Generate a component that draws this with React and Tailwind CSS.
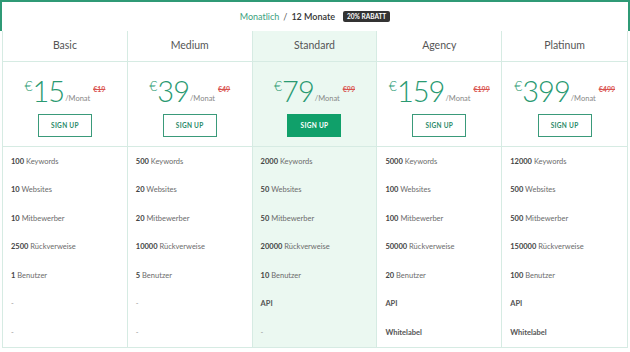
import React from "react";

const plans = [
  {name: "Basic", price: "15", old: "€19", features: ["100|Keywords", "10|Websites", "10|Mitbewerber", "2500|Rückverweise", "1|Benutzer", "-", "-"]},
  {name: "Medium", price: "39", old: "€49", features: ["500|Keywords", "20|Websites", "20|Mitbewerber", "10000|Rückverweise", "5|Benutzer", "-", "-"]},
  {name: "Standard", price: "79", old: "€99", featured: true, features: ["2000|Keywords", "50|Websites", "50|Mitbewerber", "20000|Rückverweise", "10|Benutzer", "API", "-"]},
  {name: "Agency", price: "159", old: "€199", features: ["5000|Keywords", "100|Websites", "100|Mitbewerber", "50000|Rückverweise", "20|Benutzer", "API", "Whitelabel"]},
  {name: "Platinum", price: "399", old: "€499", features: ["12000|Keywords", "500|Websites", "500|Mitbewerber", "150000|Rückverweise", "100|Benutzer", "API", "Whitelabel"]},
];

function Feature({value}) {
  if (value === "-") {
    return <span className="text-[#999]">-</span>;
  }
  if (!value.includes("|")) {
    return <span className="font-bold text-[#555]">{value}</span>;
  }
  const [num, label] = value.split("|");
  return (
      <span>
        <span className="font-bold text-[#444]">{num}</span>{" "}
        <span className="text-[#6b6b6b]">{label}</span>
      </span>
  );
}

function PlanColumn({plan, last}) {
  return (
      <div className={`flex flex-col ${last ? "" : "border-r border-[#d6ebe3]"} ${plan.featured ? "bg-[#ebf8f1]" : "bg-white"}`}>
        <div className="h-[31px] flex items-center justify-center border-b border-[#d6ebe3] text-[10.5px] text-[#555]">
          {plan.name}
        </div>
        <div className="h-[85px] flex flex-col items-center border-b border-[#d6ebe3]">
          <div className="flex items-start mt-[14px] text-[#2a9a72]">
            <span className="text-[14px] font-light leading-none mt-[3px]">€</span>
            <span className="text-[29px] font-light leading-none tracking-[-1px]">{plan.price}</span>
            <span className="text-[7.5px] text-[#888] self-end mb-[1px] ml-[1px]">/Monat</span>
            <span className="text-[7px] font-bold text-[#d9534f] line-through ml-[3px] mt-[8px]">{plan.old}</span>
          </div>
          <button
              className={`mt-[9px] w-[54px] h-[23px] text-[6.5px] font-bold tracking-[0.3px] ${plan.featured ? "bg-[#10a06a] text-white" : "border border-[#3a9a7a] text-[#2a8a68] bg-white"}`}>
            SIGN UP
          </button>
        </div>
        {plan.features.map((f, i) => (
            <div key={i} className="h-[28.5px] flex items-center pl-[8px] text-[7.5px]">
              <Feature value={f}/>
            </div>
        ))}
      </div>
  );
}

export default function App() {
  return (
      <div className="w-[630px] h-[352px] bg-white" style={{fontFamily: "Lato, 'Liberation Sans', sans-serif"}}>
        <div className="h-[31px] border-2 border-b-0 border-[#2f9a76] flex items-center justify-center gap-[4px] text-[9px]">
          <span className="text-[#3c9f80]">Monatlich</span>
          <span className="text-[#555]">/</span>
          <span className="text-[#333] font-semibold">12 Monate</span>
          <span className="ml-[4px] bg-[#333] text-white text-[6.5px] font-bold px-[4px] py-[1px] rounded-[2px]">20% RABATT</span>
        </div>
        <div className="mx-[2px] grid grid-cols-5 border border-t-0 border-[#d6ebe3]">
          {plans.map((p, i) => (
              <PlanColumn key={p.name} plan={p} last={i === plans.length - 1}/>
          ))}
        </div>
      </div>
  );
}
